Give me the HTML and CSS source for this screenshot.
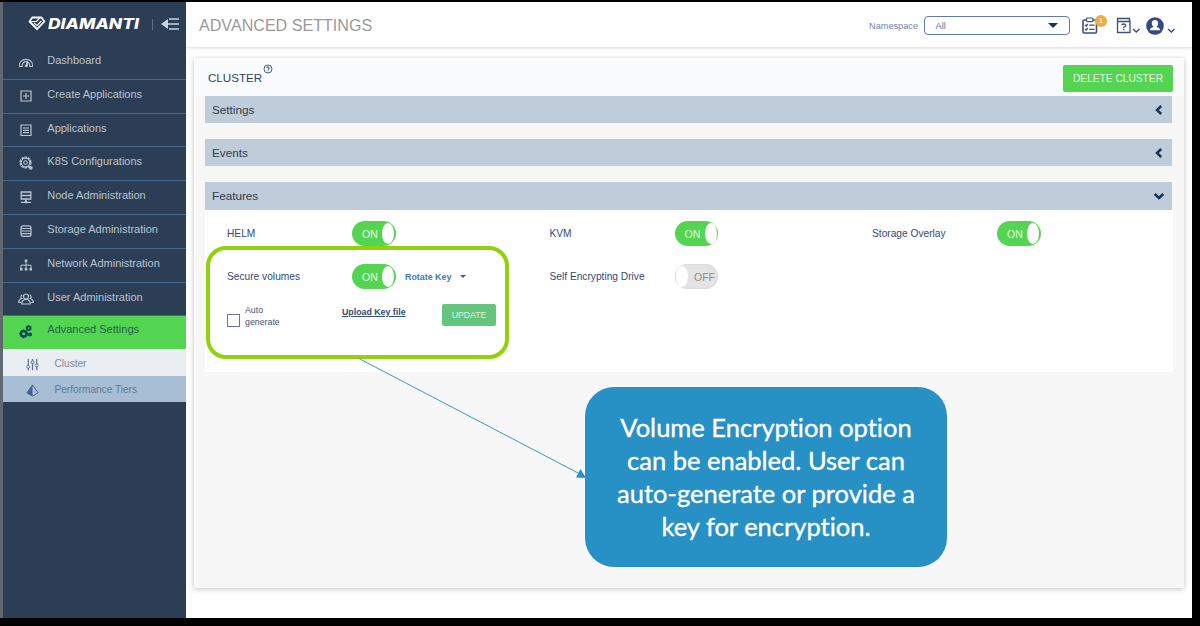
FILE: index.html
```html
<!DOCTYPE html>
<html lang="en">
<head>
<meta charset="utf-8">
<title>Diamanti - Advanced Settings</title>
<link rel="stylesheet" href="styles.css">
</head>
<body>
<div class="window">
  <aside class="sidebar">
    <div class="brand">
      <svg class="logo" width="112" height="20" viewBox="0 0 112 20">
        <path d="M4.300 3.500H13.500L16.400 7.500L9 15.200L1.500 7.500Z" fill="none" stroke="#fff" stroke-width="1.800" stroke-linejoin="round"/>
        <path d="M2 7.500H8.500L11.500 4M6 9L9 11.700L13.300 7" fill="none" stroke="#fff" stroke-width="1.200"/>
        <text class="wordmark" x="20" y="14.800" textLength="91" lengthAdjust="spacingAndGlyphs">DIAMANTI</text>
      </svg>
      <i class="brand-divider"></i>
      <svg class="collapse" width="19" height="14" viewBox="0 0 19 14"><path d="M0 7L7 2V12Z" fill="#c9d3df"/><path d="M8 2H18M6 7H18M8 12H18" stroke="#c9d3df" stroke-width="1.500"/></svg>
    </div>
    <nav class="menu">
      <a class="item first"><svg class="ico" viewBox="0 0 16 16"><path d="M1.500 12.500C0 3 16 3 14.500 12.500H11.800C12.500 6 3.500 6 4.200 12.500Z" fill="none" stroke="currentColor" stroke-width="1.200"/><path d="M7 12.500L9.500 7.500L9.300 12.500Z" fill="currentColor" stroke="currentColor"/></svg><span>Dashboard</span></a>
      <a class="item"><svg class="ico" viewBox="0 0 16 16"><path d="M3 3H13V13H3ZM8 5V11M5 8H11" fill="none" stroke="currentColor" stroke-width="1.200"/></svg><span>Create Applications</span></a>
      <a class="item short"><svg class="ico" viewBox="0 0 16 16"><path d="M3 3H13V13.500H3ZM5 6H11M5 8.300H11M5 10.600H11" fill="none" stroke="currentColor" stroke-width="1.200"/></svg><span>Applications</span></a>
      <a class="item"><svg class="ico" viewBox="0 0 16 16"><circle cx="7.500" cy="7.500" r="5.100" fill="none" stroke="currentColor" stroke-width="1.900" stroke-dasharray="2.500 .7"/><circle cx="7.500" cy="7.500" r="4.300" fill="none" stroke="currentColor"/><circle cx="7.500" cy="7.500" r="1.800" fill="none" stroke="currentColor" stroke-width="1.100"/><circle cx="12.800" cy="12.800" r="1.900" fill="currentColor"/></svg><span>K8S Configurations</span></a>
      <a class="item"><svg class="ico" viewBox="0 0 16 16"><path d="M3.200 3H12.800V6.500H3.200ZM3.200 6.500H12.800V10H3.200ZM8 10V13M3 13.300H13" fill="none" stroke="currentColor" stroke-width="1.300"/><circle cx="8" cy="13" r="1.400" fill="currentColor"/></svg><span>Node Administration</span></a>
      <a class="item"><svg class="ico" viewBox="0 0 16 16"><rect x="3" y="2.800" width="10" height="10.500" rx="2" fill="none" stroke="currentColor" stroke-width="1.200"/><path d="M3 5.500H13M3 8H13M3 10.600H13" stroke="currentColor" stroke-width="1.200"/></svg><span>Storage Administration</span></a>
      <a class="item"><svg class="ico" viewBox="0 0 16 16"><path d="M8 4V12M3 12V8.200H13V12" fill="none" stroke="currentColor"/><path d="M6.700 2.500H9.300V5H6.700ZM2 11H4.500V13.500H2ZM6.700 11H9.300V13.500H6.700ZM11.500 11H14V13.500H11.500Z" fill="currentColor"/></svg><span>Network Administration</span></a>
      <a class="item short"><svg class="ico" viewBox="0 0 16 16"><g fill="none" stroke="currentColor" stroke-width="1.200"><circle cx="8" cy="5.500" r="2.500"/><path d="M3.700 13C3.700 10.500 5 9 6.500 8.500H9.500C11 9 12.300 10.500 12.300 13Z"/><path d="M4.600 4A1.900 1.900 0 0 0 3.700 7.500C1.600 8.200 .7 9.500 .7 11.500H3M11.400 4A1.900 1.900 0 0 1 12.300 7.500C14.400 8.200 15.300 9.500 15.300 11.500H13"/></g></svg><span>User Administration</span></a>
      <a class="item active"><svg class="ico" viewBox="0 0 16 16"><g fill="none" stroke="#0d4458"><circle cx="5.700" cy="9.800" r="2.700" stroke-width="2.300"/><circle cx="5.700" cy="9.800" r="4" stroke-width="1" stroke-dasharray="1.800 1.100"/><circle cx="10.700" cy="4.100" r="1.900" stroke-width="1.900"/><circle cx="12" cy="10.500" r="1.200" stroke-width="1.700"/></g></svg><span>Advanced Settings</span></a>
      <a class="sub"><svg class="ico" viewBox="0 0 16 16"><path d="M3.500 2V14M8 2V14M12.500 2V14" stroke="#5a6c98" stroke-width="1.300"/><g fill="#eaedf1" stroke="#5a6c98"><circle cx="3.500" cy="10.500" r="1.600"/><circle cx="8" cy="5.500" r="1.600"/><circle cx="12.500" cy="9" r="1.600"/></g></svg><span>Cluster</span></a>
      <a class="sub tiers"><svg class="ico" viewBox="0 0 16 16"><path d="M8 2L2 10.500L8 14L14 10.500Z" fill="none" stroke="#465f98"/><path d="M8 2L2 10.500L8 14Z" fill="#465f98"/></svg><span>Performance Tiers</span></a>
    </nav>
  </aside>
  <main class="main">
    <header class="topbar">
      <h1>ADVANCED SETTINGS</h1>
      <label class="ns">Namespace</label>
      <div class="select"><span>All</span><i class="tri"></i></div>
      <div class="tasks">
        <svg width="16" height="18" viewBox="0 0 16 18"><rect x="1" y="3" width="13.500" height="13" rx="1.300" fill="none" stroke="#3b4f80" stroke-width="1.600"/><rect x="4.500" y="1" width="6.500" height="3.600" rx="1" fill="#fff" stroke="#3b4f80" stroke-width="1.200"/><path d="M3 8L4.200 9L5.800 7M3 12L4.200 13L5.800 11M7.300 8.200H12.500M7.300 12.300H12.500" fill="none" stroke="#3b4f80" stroke-width="1.300"/></svg>
        <b class="badge">1</b>
      </div>
      <svg class="help" width="24" height="18" viewBox="0 0 24 18"><path d="M1.500 4.500V1.500H13.500V4.500M1.500 4.500H14V15.500H1.500Z" fill="none" stroke="#3b4f80" stroke-width="1.300"/><path d="M5.700 8.300Q5.800 7 7.700 7T9.700 8.300Q9.700 9.200 8.700 9.700Q7.800 10.100 7.800 11M7.800 12V13.300" fill="none" stroke="#3b4f80" stroke-width="1.300"/><path d="M17 12L20.300 15L23.500 12" fill="none" stroke="#3b4f80" stroke-width="1.500"/></svg>
      <svg class="user" width="30" height="18" viewBox="0 0 30 18"><circle cx="9" cy="9" r="8.800" fill="#34497f"/><path d="M9 3C6.700 3 5.700 4.600 5.800 6.200C5.900 8 6.700 9 7.300 9.500V10C5.500 10.600 4 11.300 3.900 13.200H14.100C14 11.300 12.500 10.600 10.700 10V9.500C11.300 9 12.100 8 12.200 6.200C12.300 4.600 11.300 3 9 3Z" fill="#fff"/><path d="M22 12L25.300 15L28.600 12" fill="none" stroke="#3b4f80" stroke-width="1.500"/></svg>
    </header>
    <section class="panel">
      <div class="panel-head">
        <h2>CLUSTER</h2>
        <svg class="hint" width="10" height="10" viewBox="0 0 10 10"><circle cx="5" cy="5" r="4" fill="none" stroke="#4c5d8e"/><path d="M3.600 4Q3.700 3 5 3T6.300 4Q6.300 4.700 5.100 5.200V5.800M5.100 6.400V7.300" fill="none" stroke="#34497f"/></svg>
        <button class="delete">DELETE CLUSTER</button>
      </div>
      <div class="sections">
        <div class="bar"><span>Settings</span><svg width="10" height="12" viewBox="0 0 10 12"><path d="M7.200 2L3 6L7.200 10" fill="none" stroke="#1c3550" stroke-width="2.500"/></svg></div>
        <div class="bar"><span>Events</span><svg width="10" height="12" viewBox="0 0 10 12"><path d="M7.200 2L3 6L7.200 10" fill="none" stroke="#1c3550" stroke-width="2.500"/></svg></div>
        <div class="bar open"><span>Features</span><svg width="12" height="12" viewBox="0 0 12 12"><path d="M1.700 4L6 8L10.300 4" fill="none" stroke="#0e3463" stroke-width="2.600"/></svg></div>
        <div class="features">
          <div class="cell"><span class="name">HELM</span><span class="toggle">ON<i></i></span></div>
          <div class="cell"><span class="name">KVM</span><span class="toggle">ON<i></i></span></div>
          <div class="cell"><span class="name">Storage Overlay</span><span class="toggle">ON<i></i></span></div>
          <div class="cell"><span class="name">Secure volumes</span><span class="toggle">ON<i></i></span><span class="rotate">Rotate Key</span><i class="tri small"></i></div>
          <div class="cell"><span class="name">Self Encrypting Drive</span><span class="toggle off"><i></i>OFF</span></div>
          <div class="cell"></div>
          <div class="key-row">
            <i class="check"></i><span class="auto">Auto<br>generate</span>
            <a class="upload">Upload Key file</a>
            <button class="update">UPDATE</button>
          </div>
        </div>
      </div>
    </section>
  </main>
</div>
<div class="highlight"></div>
<svg class="arrow" width="232" height="124" viewBox="0 0 232 124"><path d="M2 1L223 116.500" stroke="#3b98c6" stroke-width="1"/><path d="M230 121L220 120.500L224.500 112Z" fill="#2791c5"/></svg>
<div class="callout"><span>Volume Encryption option</span><span>can be enabled. User can</span><span>auto-generate or provide a</span><span>key for encryption.</span></div>
</body>
</html>
```
FILE: styles.css
```css
* { box-sizing: border-box; }
body { margin: 0; width: 1200px; height: 626px; overflow: hidden; background: #000; font-family: "Liberation Sans", Arial, sans-serif; position: relative; padding-top: 2px; }
h1, h2 { margin: 0; font-weight: normal; }
button { border: 0; padding: 0; font-family: inherit; }
svg { display: block; flex: none; }
.window { display: flex; width: 1191.500px; height: 616px; background: #fff; overflow: hidden; }
.sidebar { width: 186px; flex: none; background: #2c3e55; border-left: 3px solid #62686f; }
.brand { height: 44px; display: flex; align-items: center; padding-left: 24.500px; }
.wordmark { font: italic 800 14.500px Inter, sans-serif; fill: #fff; }
.brand-divider { width: 1px; height: 11px; background: #5e7087; margin-left: 12.500px; }
.collapse { margin-left: 8px; }
.item { display: flex; height: 34px; border-bottom: 1px solid #47678c; padding: 6px 0 0 15px; color: #b9c3cf; font-size: 11px; line-height: 16px; }
.item.short { height: 33px; }
.item .ico { width: 16px; height: 16px; margin: 2px 13px 0 0; }
.item span { margin-left: .3px; }
.item.active { height: 33px; background: #54d551; border: 0; color: #25604f; padding-top: 5px; }
.item.active .ico { margin-top: 3px; }
.sub { display: flex; height: 27px; align-items: center; padding-left: 22px; background: #eaedf1; font-size: 10.100px; color: #7e8997; padding-top: 1px; }
.sub .ico { width: 15px; height: 15px; margin: 2px 14.500px 0 0; }
.tiers { height: 26px; background: #a8bed5; color: #63788f; }
.main { flex: 1; display: flex; flex-direction: column; min-width: 0; overflow: hidden; }
.topbar { height: 46px; flex: none; display: flex; align-items: center; padding: 2px 0 0 13px; border-bottom: 1px solid #e8e8e8; box-shadow: 0 1px 3px #e9e9e9; }
h1 { font-size: 16.100px; color: #999; width: 670px; line-height: 20px; margin-top: -1px; }
.ns { font-size: 9.200px; color: #7084a5; width: 55px; }
.select { width: 146px; height: 19px; border: 1px solid #5d7cac; border-radius: 4px; display: flex; align-items: center; justify-content: space-between; padding: 0 11px 0 10.500px; font-size: 9.200px; color: #4f78ab; }
.tri { width: 0; height: 0; border: 5px solid transparent; border-top-color: #16315d; border-bottom: 0; }
.tasks { position: relative; width: 34px; margin-left: 12px; }
.badge { position: absolute; left: 13px; top: -2px; width: 12px; height: 12px; border-radius: 50%; background: #f0ad3b; color: #fff; font-size: 8px; line-height: 12px; text-align: center; font-weight: normal; }
.user { margin-left: 6px; }
.panel { margin: 10px 7.500px 0 8px; height: 530px; background: #f7f7f7; box-shadow: 0 1px 5px rgba(0,0,0,.25); }
.panel-head { height: 38px; background: #f9fbfd; display: flex; padding: 7px 11px 0 14px; }
h2 { font-size: 11.600px; line-height: 14px; color: #2d4264; margin-top: 5.500px; }
.hint { margin: -1px 0 0 1px; }
.delete { width: 110px; height: 27px; margin-left: auto; border-radius: 2px; background: #54d551; color: #e6f9e6; font-size: 10.200px; }
.sections { padding: 0 11px 0 11px; }
.bar { height: 27px; margin: 0 1px 16px 0; display: flex; align-items: center; justify-content: space-between; padding: 0 8px 0 7px; background: #bfccd9; color: #2e3d50; font-size: 11.700px; }
.bar.open { margin-bottom: 0; height: 28px; padding: 0 7px 1px 7px; }
.features { height: 162px; background: #fff; padding-left: 22px; padding-top: 2px; display: grid; grid-template-columns: 322.500px 322.500px 1fr; grid-template-rows: 43px 43px 40px; align-items: center; }
.cell { display: flex; align-items: center; }
.name { width: 125px; font-size: 10.200px; color: #34487a; }
.toggle { width: 43.500px; height: 25px; border-radius: 13px; background: #54d551; color: #e2f9e1; font-size: 10.500px; line-height: 26px; display: flex; align-items: center; justify-content: space-between; padding: 0 1.500px 0 10px; }
.toggle i { width: 12px; height: 21px; border-radius: 50%; background: #fff; }
.toggle.off { background: #e4e4e4; color: #8d8d8d; padding: 0 3px 0 1px; box-shadow: inset 0 0 2px #c5c5c5; }
.rotate { font-size: 8.900px; font-weight: bold; color: #4679b0; margin-left: 9.500px; }
.tri.small { border-width: 3px; border-bottom: 0; border-top-color: #2f639a; margin-left: 9px; }
.key-row { grid-column: 1 / -1; display: flex; align-items: center; height: 30px; margin-top: -3px; }
.check { width: 13px; height: 13px; border: 1px solid #6d7594; margin: 8px 5px 0 0; }
.auto { font-size: 8.800px; line-height: 12px; color: #3f5181; width: 97px; margin-top: -1px; }
.upload { font-size: 8.800px; font-weight: bold; color: #2f4d76; text-decoration: underline; width: 100px; margin-top: -9px; }
.update { width: 54px; height: 22px; border-radius: 2px; background: #66c57c; color: #dcf3e1; font-size: 8.700px; margin-top: -3px; }
.highlight { position: absolute; left: 206px; top: 246px; width: 303px; height: 113px; border: 4px solid #92d10d; border-radius: 20px; }
.arrow { position: absolute; left: 356px; top: 357px; }
.callout { position: absolute; left: 585px; top: 387px; width: 362px; height: 180px; border-radius: 29px; background: #2791c5; color: #fff; font: 25.500px/33px Lato, sans-serif; font-variant-ligatures: none; -webkit-text-stroke: .35px #fff; display: flex; flex-direction: column; align-items: center; padding-top: 24px; white-space: nowrap; }
```
